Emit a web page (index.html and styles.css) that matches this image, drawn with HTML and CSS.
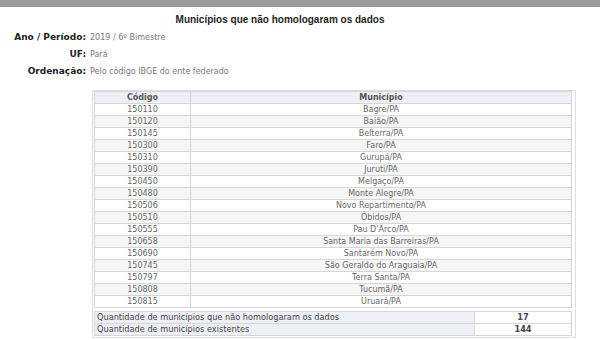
FILE: index.html
```html
<!DOCTYPE html>
<html lang="pt">
<head>
<meta charset="utf-8">
<link rel="stylesheet" href="styles.css">
</head>
<body>
<div class="topbar"></div>
<h1 class="title">Municípios que não homologaram os dados</h1>
<div class="info">
  <div class="info-row"><span class="lbl">Ano / Período:</span><span class="val">2019 / 6º Bimestre</span></div>
  <div class="info-row"><span class="lbl">UF:</span><span class="val">Pará</span></div>
  <div class="info-row"><span class="lbl">Ordenação:</span><span class="val">Pelo código IBGE do ente federado</span></div>
</div>
<div class="box">
  <table class="grid">
    <thead>
      <tr><th class="c1">Código</th><th>Município</th></tr>
    </thead>
    <tbody>
      <tr><td>150110</td><td>Bagre/PA</td></tr>
      <tr><td>150120</td><td>Baião/PA</td></tr>
      <tr><td>150145</td><td>Belterra/PA</td></tr>
      <tr><td>150300</td><td>Faro/PA</td></tr>
      <tr><td>150310</td><td>Gurupá/PA</td></tr>
      <tr><td>150390</td><td>Juruti/PA</td></tr>
      <tr><td>150450</td><td>Melgaço/PA</td></tr>
      <tr><td>150480</td><td>Monte Alegre/PA</td></tr>
      <tr><td>150506</td><td>Novo Repartimento/PA</td></tr>
      <tr><td>150510</td><td>Óbidos/PA</td></tr>
      <tr><td>150555</td><td>Pau D'Arco/PA</td></tr>
      <tr><td>150658</td><td>Santa Maria das Barreiras/PA</td></tr>
      <tr><td>150690</td><td>Santarém Novo/PA</td></tr>
      <tr><td>150745</td><td>São Geraldo do Araguaia/PA</td></tr>
      <tr><td>150797</td><td>Terra Santa/PA</td></tr>
      <tr><td>150808</td><td>Tucumã/PA</td></tr>
      <tr><td>150815</td><td>Uruará/PA</td></tr>
    </tbody>
  </table>
  <table class="summary">
    <tr><td class="s-lbl">Quantidade de municípios que não homologaram os dados</td><td class="s-val">17</td></tr>
    <tr><td class="s-lbl">Quantidade de municípios existentes</td><td class="s-val">144</td></tr>
  </table>
</div>
</body>
</html>
```
FILE: styles.css
```css
html, body {
  margin: 0;
  padding: 0;
  background: #fff;
}
body {
  font-family: "DejaVu Sans", Verdana, sans-serif;
  color: #555;
  width: 600px;
  height: 340px;
  overflow: hidden;
}
.topbar {
  height: 7px;
  background: #9b9b9b;
}
.title {
  margin: 6px 0 0 0;
  width: 560px;
  text-align: center;
  font-family: "Liberation Sans", Arial, sans-serif;
  font-size: 10px;
  font-weight: bold;
  color: #1e1e1e;
  line-height: 14px;
}
.info {
  margin-top: 5px;
  display: flex;
  flex-direction: column;
  gap: 5px;
}
.info-row {
  display: flex;
  align-items: baseline;
  height: 12px;
}
.lbl {
  width: 88px;
  text-align: right;
  font-weight: bold;
  font-size: 9px;
  color: #222;
  padding-right: 2px;
  box-sizing: border-box;
}
.val {
  font-size: 8px;
  color: #777;
  padding-left: 2px;
}
.box {
  margin: 12px 0 0 92px;
  width: 484px;
  border: 1px solid #ddd;
  box-sizing: border-box;
  padding: 0 3px 1px 1px;
}
table {
  border-collapse: collapse;
  width: 100%;
  font-size: 8px;
  color: #666;
}
.grid th, .grid td {
  height: 11px;
  padding: 0;
  line-height: 11px;
  text-align: center;
  border: 1px solid #d6d6d6;
}
.grid th {
  background: #eef0f6;
  font-weight: bold;
  color: #555;
}
.grid .c1 {
  width: 95px;
}
.grid tbody tr:nth-child(even) td {
  background: #f6f6f6;
}
.summary {
  margin-top: 3px;
  font-size: 8.2px;
}
.summary td {
  height: 11px;
  padding: 0 2px;
  line-height: 11px;
  border: 1px solid #d6d6d6;
  color: #444;
}
.s-lbl {
  background: #eef0f6;
  text-align: left;
}
.s-val {
  width: 92px;
  text-align: center;
  font-weight: bold;
  color: #555;
}
```
